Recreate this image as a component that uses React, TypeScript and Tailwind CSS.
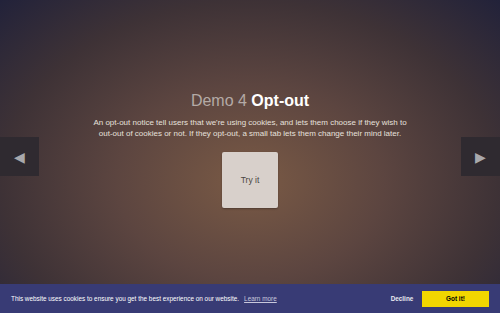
import React from 'react';

const App = () => {
  return (
    <div
      className="relative w-[500px] h-[313px] overflow-hidden bg-[radial-gradient(ellipse_at_50%_58%,#7a5a45_0%,#5c4540_38%,#3e3236_70%,#22223a_100%)]"
      style={{ fontFamily: '"Liberation Sans", Arial, sans-serif' }}
    >
      <div className="flex flex-col items-center pt-[90px]">
        <h1 className="text-[16px] leading-[21px] text-[#b4aaa6] font-light">
          Demo 4 <span className="font-bold text-white">Opt-out</span>
        </h1>
        <p className="mt-[6px] text-center text-[8px] leading-[11px] text-[#e6e0dc] whitespace-nowrap">
          An opt-out notice tell users that we're using cookies, and lets them choose if they wish to
          <br />
          out-out of cookies or not. If they opt-out, a small tab lets them change their mind later.
        </p>
        <button className="mt-[13px] w-[56px] h-[56px] rounded-[2px] bg-[#d8d0cb] text-[8.5px] font-normal text-[#4a4440] shadow-[0_1px_2px_rgba(0,0,0,0.3)]">
          Try it
        </button>
      </div>

      <div className="absolute left-0 top-[137px] w-[39px] h-[39px] bg-[#2f2a30] flex items-center justify-center">
        <span className="text-[14px] text-[#a8a8ac] leading-none">◀</span>
      </div>
      <div className="absolute right-0 top-[137px] w-[39px] h-[39px] bg-[#2f2a30] flex items-center justify-center">
        <span className="text-[14px] text-[#a8a8ac] leading-none">▶</span>
      </div>

      <div className="absolute left-0 bottom-0 w-full h-[29px] bg-[#383b75] flex items-center pl-[11px] pr-[11px]">
        <span className="text-[6.4px] text-white">
          This website uses cookies to ensure you get the best experience on our website.
        </span>
        <span className="ml-[5px] text-[6.4px] text-[#c8c8dc] underline">Learn more</span>
        <div className="ml-auto flex items-center">
          <span className="text-[6.4px] font-bold text-[#e8e8f0] mr-[6px] w-[28px] text-center">Decline</span>
          <button className="w-[67px] h-[16px] bg-[#f1d600] text-[6.4px] font-bold text-black">
            Got it!
          </button>
        </div>
      </div>
    </div>
  );
};

export default App;
